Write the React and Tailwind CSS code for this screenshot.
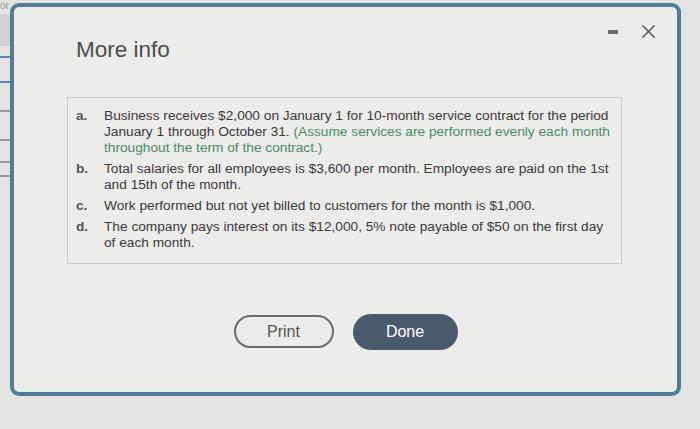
import { X } from 'lucide-react'

const items = [
  {
    label: 'a.',
    text: (
      <>
        Business receives $2,000 on January 1 for 10-month service contract for the period January 1 through October 31.{' '}
        <span className="text-[#4f8a62]">(Assume services are performed evenly each month throughout the term of the contract.)</span>
      </>
    ),
  },
  { label: 'b.', text: 'Total salaries for all employees is $3,600 per month. Employees are paid on the 1st and 15th of the month.' },
  { label: 'c.', text: 'Work performed but not yet billed to customers for the month is $1,000.' },
  { label: 'd.', text: 'The company pays interest on its $12,000, 5% note payable of $50 on the first day of each month.' },
]

export default function App() {
  return (
    <div className="w-[700px] h-[429px] bg-[#e3e3e1] flex overflow-hidden" style={{ fontFamily: '"Liberation Sans", Arial, sans-serif' }}>
      {/* bits of the page behind the dialog */}
      <div className="w-[10px] shrink-0 flex flex-col">
        <span className="text-[10px] leading-[12px] text-[#8aa08a]">or</span>
        <div className="h-[32px] bg-[#d2d2d0] mt-[2px]" />
        <div className="h-[2px] bg-[#6a7fb0] mt-[10px]" />
        <div className="h-[2px] bg-[#6a7fb0] mt-[23px]" />
        <div className="h-[2px] bg-[#9a9a9a] mt-[27px]" />
        <div className="h-[2px] bg-[#9a9a9a] mt-[27px]" />
        <div className="h-[2px] bg-[#9a9a9a] mt-[20px]" />
        <div className="h-[2px] bg-[#9a9a9a] mt-[12px]" />
      </div>

      <div className="mt-[3px] w-[671px] h-[393px] shrink-0 border-4 border-[#4d8098] rounded-[9px] bg-[#ececea] flex flex-col">
        <div className="flex items-start justify-between pl-[62px] pr-[17px] pt-[30px]">
          <h1 className="text-[22.5px] leading-[26px] text-[#4d4d4d]">More info</h1>
          <div className="flex items-center gap-[19px] -mt-[17px]">
            <div className="w-[10px] h-[4px] bg-[#6b6b6b] mt-[1px]" />
            <X className="w-[23px] h-[23px] text-[#5a5a5a]" strokeWidth={1.6} />
          </div>
        </div>

        <div className="ml-[53px] mt-[34px] w-[555px] h-[167px] border border-[#c9c9c7] pl-[8px] pr-[6px] pt-[10px] flex flex-col gap-[5px] text-[13.7px] leading-[16px] text-[#3a3a3a]">
          {items.map(item => (
            <div key={item.label} className="flex">
              <span className="w-[28px] shrink-0 font-bold text-[#555]">{item.label}</span>
              <p>{item.text}</p>
            </div>
          ))}
        </div>

        <div className="flex justify-center gap-[19px] mt-[51px]">
          <button className="w-[100px] h-[33px] rounded-full border-2 border-[#6b6b6b] text-[16px] text-[#555]">Print</button>
          <button className="w-[105px] h-[36px] -mt-[1px] rounded-full bg-[#4b596c] text-[16px] text-white">Done</button>
        </div>
      </div>
    </div>
  )
}
